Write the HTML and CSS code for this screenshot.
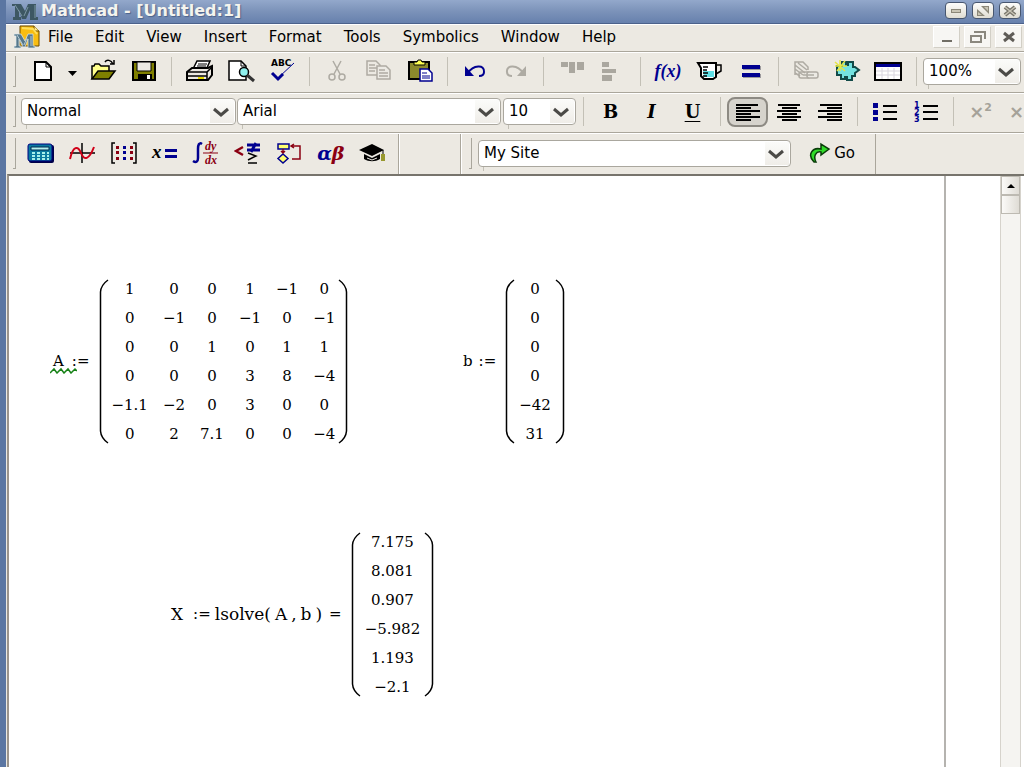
FILE: index.html
```html
<!DOCTYPE html>
<html lang="en">
<head>
    <meta charset="UTF-8">
    <meta name="viewport" content="width=device-width, initial-scale=1.0">
    <title>Mathcad - [Untitled:1]</title>
    <link rel="stylesheet" href="styles.css">
</head>
<body>
<div class="window">
    <header class="titlebar">
        <svg class="title-logo" width="28" height="20" viewBox="0 0 28 20">
            <path d="M1 3h9l4 7 3-7h8v13h2v3h-8V9l-4 9h-4L8 9v7h2v3H2v-3h2V5H1z" fill="#3d5763"/>
            <path d="M4 4l7 11M24 4v13M17 6l-4 9" stroke="#7d98a4" fill="none"/>
        </svg>
        <h1>Mathcad - [Untitled:1]</h1>
        <div class="window-buttons">
            <button aria-label="Minimize"><svg width="14" height="12" viewBox="0 0 14 12"><rect x="2" y="4" width="10" height="4" fill="#8b8778"/><rect x="3" y="5" width="8" height="2" fill="#c9c5b5"/></svg></button>
            <button aria-label="Maximize"><svg width="14" height="12" viewBox="0 0 14 12"><path d="M5 1h8v8zM1 4v7h8z" fill="#8b8778"/><path d="M8 2h4v4zM2 7v3h4z" fill="#c9c5b5"/></svg></button>
            <button aria-label="Close"><svg width="14" height="12" viewBox="0 0 14 12"><path d="M2 2l10 8M12 2L2 10" stroke="#77746a" stroke-width="4"/><path d="M2 2l10 8M12 2L2 10" stroke="#c9c5b5" stroke-width="1.5"/></svg></button>
        </div>
    </header>

    <nav class="menubar">
        <svg class="doc-logo" width="26" height="24" viewBox="0 0 26 24">
            <path d="M6 1h14l5 5v15H6z" fill="#f8bd12" stroke="#6d4a00"/>
            <path d="M20 1v5h5" fill="#ffe88a" stroke="#6d4a00"/>
            <path d="M8 3l11 1 4 5" stroke="#ffdf5c" stroke-width="2" fill="none"/>
            <path d="M0 9h7l4 7 3-7h5v12h2v2h-7v-9l-3 8H9l-4-8v7h2v2H0v-2h2V11H0z" fill="#56788c" stroke="#dfe9ee" stroke-width=".7"/>
            <path d="M3 10l6 10M13 13l-3 7M17 11v10" stroke="#b4c9d3" fill="none"/>
        </svg>
        <div class="menus">
            <a href="#">File</a>
            <a href="#">Edit</a>
            <a href="#">View</a>
            <a href="#">Insert</a>
            <a href="#">Format</a>
            <a href="#">Tools</a>
            <a href="#">Symbolics</a>
            <a href="#">Window</a>
            <a href="#">Help</a>
        </div>
        <div class="doc-buttons">
            <button aria-label="Minimize document"><svg width="16" height="14" viewBox="0 0 16 14"><path d="M3 11h10" stroke="#716e66" stroke-width="2"/></svg></button>
            <button aria-label="Restore document"><svg width="16" height="14" viewBox="0 0 16 14"><path d="M4 2h11v7M1 6h10v6H1z" stroke="#8b887f" stroke-width="2" fill="none"/></svg></button>
            <button aria-label="Close document"><svg width="16" height="14" viewBox="0 0 16 14"><path d="M3 3l10 8M13 3L3 11" stroke="#5f5c57" stroke-width="3"/></svg></button>
        </div>
    </nav>

    <div class="toolbar standard">
        <span class="grip"></span>
        <button class="tool" aria-label="New">
            <svg viewBox="0 0 28 28"><path d="M5 5h11l5 5v13H5z" fill="#fff" stroke="#000" stroke-width="2"/><path d="M16 5v5h5" fill="none" stroke="#000"/></svg>
        </button>
        <button class="tool-arrow" aria-label="New from template">
            <svg width="10" height="6" viewBox="0 0 10 6"><path d="M0 1h9L4.500 6z"/></svg>
        </button>
        <button class="tool" aria-label="Open">
            <svg viewBox="0 0 28 28"><path d="M3 22V9h2l1-2h4l2 2h8v5" fill="#ffff8c" stroke="#000" stroke-width="1.500"/><path d="M3 22l6-8h17l-6 8z" fill="#808000" stroke="#000" stroke-width="1.500"/><path d="M16 5c2-3 6-2 8 2M25 3v4h-4" fill="none" stroke="#000" stroke-width="1.500"/></svg>
        </button>
        <button class="tool" aria-label="Save">
            <svg viewBox="0 0 28 28"><path d="M3 5h22v18H3z" fill="#808000" stroke="#000" stroke-width="2"/><path d="M7 5h14v9H7z" fill="#ece9e2" stroke="#000"/><path d="M8 17h14v6H8z"/><path d="M17 18h3v4h-3z" fill="#fff"/></svg>
        </button>
        <span class="sep"></span>
        <button class="tool" aria-label="Print">
            <svg viewBox="0 0 28 28"><path d="M8 12l4-8h13l-4 9" fill="#fff" stroke="#000" stroke-width="1.500"/><path d="M13 7h9M12 9h9M11 11h9" stroke="#000"/><path d="M2 15l5-4h16l4-2v9l-4 5H2z" fill="#ece9e2" stroke="#000" stroke-width="2"/><path d="M2 15h20l4-4M22 15v8M2 19h20" fill="none" stroke="#000" stroke-width="1.500"/><path d="M13 20h6v2h-6z" fill="#e6d800"/></svg>
        </button>
        <button class="tool" aria-label="Print preview">
            <svg viewBox="0 0 28 28"><path d="M2 4h12l5 5v14H2z" fill="#fff" stroke="#000" stroke-width="1.500"/><path d="M14 4v5h5" fill="none" stroke="#000"/><circle cx="17" cy="15" r="4.500" fill="#8ff0ee" stroke="#000" stroke-width="1.500"/><path d="M20 18l7 6" stroke="#333" stroke-width="3"/></svg>
        </button>
        <button class="tool" aria-label="Check spelling">
            <svg viewBox="0 0 28 28"><text x="3" y="9" class="abc">ABC</text><path d="M10 21L26 6" fill="none" stroke="#000090"/><path d="M4 16l6 6 5-5" fill="none" stroke="#000090" stroke-width="3"/></svg>
        </button>
        <span class="sep"></span>
        <button class="tool" aria-label="Cut">
            <svg viewBox="0 0 28 28" class="gray"><path d="M10 4l7 13M18 4l-7 13"/><circle cx="9" cy="20" r="3"/><circle cx="19" cy="20" r="3"/></svg>
        </button>
        <button class="tool" aria-label="Copy">
            <svg viewBox="0 0 28 28" class="gray"><path d="M3 4h9l4 4v10H3zM5 8h6M5 11h8M5 14h6"/><path d="M13 9h9l4 4v9H13z" fill="#eceae4"/><path d="M15 13h6M15 16h9M15 19h9"/></svg>
        </button>
        <button class="tool" aria-label="Paste">
            <svg viewBox="0 0 28 28"><path d="M3 5h20v17H3z" fill="#8c8a2c" stroke="#000" stroke-width="2"/><path d="M8 8V5h3l1-2h3l1 2h3v3z" fill="#ffff50" stroke="#000"/><path d="M14 12h8l4 4v8H14z" fill="#fff" stroke="#000090" stroke-width="1.500"/><path d="M16 16h5M16 19h8M16 21h8" stroke="#000090"/></svg>
        </button>
        <span class="sep"></span>
        <button class="tool" aria-label="Undo">
            <svg viewBox="0 0 28 28"><path d="M4 9v10h9z" fill="#000090"/><path d="M7 16c5-8 17-9 16-1 0 3-2 4-5 4" fill="none" stroke="#000090" stroke-width="2"/></svg>
        </button>
        <button class="tool" aria-label="Redo">
            <svg viewBox="0 0 28 28"><path d="M24 9v10h-9z" fill="#aeaba3"/><path d="M21 16C16 8 4 7 5 15c0 3 2 4 5 4" fill="none" stroke="#aeaba3" stroke-width="2"/></svg>
        </button>
        <span class="sep"></span>
        <button class="tool" aria-label="Align across">
            <svg viewBox="0 0 28 28" fill="#aaa79f"><path d="M3 5h7v5H3zM11 5h6v11h-6zM19 5h7v8h-7z"/></svg>
        </button>
        <button class="tool" aria-label="Align down">
            <svg viewBox="0 0 28 28" fill="#aaa79f"><path d="M3 5h7v5H3zM3 12h14v4H3zM3 18h10v6H3z"/></svg>
        </button>
        <span class="sep"></span>
        <button class="tool fx" aria-label="Insert function">f(x)</button>
        <button class="tool" aria-label="Insert unit">
            <svg viewBox="0 0 28 28"><path d="M3 6h18v14l-3 2H9l-3-3V11z" fill="#fff" stroke="#000" stroke-width="2"/><path d="M8 14h11v6H9z" fill="#5fe0e6"/><path d="M21 8h5v6l-5 3M8 10h5M8 13h4M8 16h5M8 19h4" fill="none" stroke="#000" stroke-width="1.500"/></svg>
        </button>
        <button class="tool" aria-label="Calculate">
            <svg viewBox="0 0 28 28"><path d="M6 9h18v4H6zM6 17h18v4H6z" fill="#9c9a9c"/><path d="M5 8h18v4H5zM5 16h18v4H5z" fill="#000090"/></svg>
        </button>
        <span class="sep"></span>
        <button class="tool" aria-label="Insert hyperlink">
            <svg viewBox="0 0 28 28" class="gray"><path d="M3 18V5h8l5 5v3M3 8l10 8M3 12l8 6M6 6l9 7M3 16l5 3"/><rect x="7" y="15" width="11" height="6" rx="2"/><rect x="15" y="15" width="11" height="6" rx="2" fill="#eceae4"/><path d="M11 18h11"/></svg>
        </button>
        <button class="tool" aria-label="Insert component">
            <svg viewBox="0 0 28 28"><path d="M4 9h5V5h4v3h2V5h5v5h2l4 3-4 3v3h-3v4h-5v-3h-2v2H8v-4H4z" fill="#74e2e0" stroke="#124a48" stroke-width="2"/><path d="M2 5l10 9M12 4L4 14M7 3v11M2 9h12" stroke="#e5e645" stroke-width="1.500"/></svg>
        </button>
        <button class="tool" aria-label="Data table">
            <svg viewBox="0 0 28 28"><path d="M1 6h26v17H1z" fill="#fff" stroke="#000" stroke-width="2"/><path d="M2 7h24v3H2z" fill="#000090"/><path d="M8 11v11M14 11v11M20 11v11M2 14h24M2 18h24" stroke="#d8d5de"/></svg>
        </button>
        <span class="sep"></span>
        <div class="combo zoom">
            <select aria-label="Zoom"><option>100%</option></select>
            <svg class="chevron" viewBox="0 0 16 10"><path d="M1 2l7 6 7-6"/></svg>
        </div>
    </div>

    <div class="toolbar formatting">
        <span class="grip"></span>
        <div class="combo style">
            <select aria-label="Style"><option>Normal</option></select>
            <svg class="chevron" viewBox="0 0 16 10"><path d="M1 2l7 6 7-6"/></svg>
        </div>
        <div class="combo font">
            <select aria-label="Font"><option>Arial</option></select>
            <svg class="chevron" viewBox="0 0 16 10"><path d="M1 2l7 6 7-6"/></svg>
        </div>
        <div class="combo size">
            <select aria-label="Font size"><option>10</option></select>
            <svg class="chevron" viewBox="0 0 16 10"><path d="M1 2l7 6 7-6"/></svg>
        </div>
        <span class="sep"></span>
        <button class="tool letter">B</button>
        <button class="tool letter italic">I</button>
        <button class="tool letter underline">U</button>
        <span class="sep"></span>
        <button class="tool pressed" aria-label="Align left">
            <svg viewBox="0 0 28 28" class="lines"><path d="M2 7h22M2 10h15M2 13h24M2 16h15M2 19h24M2 22h15"/></svg>
        </button>
        <button class="tool" aria-label="Align center">
            <svg viewBox="0 0 28 28" class="lines"><path d="M3 7h22M7 10h15M2 13h24M7 16h15M2 19h24M7 22h15"/></svg>
        </button>
        <button class="tool" aria-label="Align right">
            <svg viewBox="0 0 28 28" class="lines"><path d="M4 7h22M11 10h15M2 13h24M11 16h15M2 19h24M11 22h15"/></svg>
        </button>
        <span class="sep"></span>
        <button class="tool" aria-label="Bullets">
            <svg viewBox="0 0 28 28" class="lines"><path d="M12 8h14M12 14h14M12 21h14"/><path d="M2 5h5v5H2zM2 12h5v5H2zM2 19h5v4H2z" class="dots"/></svg>
        </button>
        <button class="tool" aria-label="Numbering">
            <svg viewBox="0 0 28 28" class="lines"><path d="M11 8h15M11 14h15M11 21h15"/><text x="2" y="10" class="num">1</text><text x="2" y="17" class="num">2</text><text x="2" y="24" class="num">3</text></svg>
        </button>
        <span class="sep"></span>
        <button class="tool script" aria-label="Superscript"><span>×<sup>2</sup></span></button>
        <button class="tool script last" aria-label="Subscript">×</button>
    </div>

    <div class="toolbar math">
        <div class="palette">
            <span class="grip"></span>
            <button class="tool" aria-label="Calculator">
                <svg viewBox="0 0 28 28"><rect x="2" y="6" width="25" height="18" rx="2" fill="#000048"/><rect x="1" y="5" width="24" height="17" rx="2" fill="#0a7aa0" stroke="#000080"/><path d="M4 8h18v3H4z" fill="#b5f1ee" stroke="#002a50"/><path d="M5 14h3M10 14h3M15 14h3M20 14h2M5 17h3M10 17h3M15 17h3M20 17h2M5 20h3M10 20h3M15 20h3M20 20h2" stroke="#a5f0ea" stroke-width="2"/></svg>
            </button>
            <button class="tool" aria-label="Graph">
                <svg viewBox="0 0 28 28"><path d="M14 4v20M2 14h25" stroke="#000" stroke-width="1.500"/><path d="M2 20c3-13 8-14 11-6s8 7 13-6" fill="none" stroke="#d00018" stroke-width="2"/></svg>
            </button>
            <button class="tool" aria-label="Matrix">
                <svg viewBox="0 0 28 28"><path d="M5 4H2v20h3M23 4h3v20h-3" fill="none" stroke="#000" stroke-width="1.500"/><path d="M6 7h3v3H6zM6 12h3v3H6zM6 18h3v3H6zM20 7h3v3h-3zM20 12h3v3h-3zM20 18h3v3h-3z" fill="#8b0012"/><path d="M13 7h3v3h-3zM13 12h3v3h-3zM13 18h3v3h-3z" fill="#000090"/></svg>
            </button>
            <button class="tool" aria-label="Evaluation">
                <svg viewBox="0 0 28 28"><text x="1" y="19" class="evalx">x</text><path d="M14 10h12v3H14zM14 16h12v3H14z" fill="#000090"/></svg>
            </button>
            <button class="tool" aria-label="Calculus">
                <svg viewBox="0 0 28 28"><path d="M10 5c-3-2-4 1-4 5v9c0 4-2 5-5 3" fill="none" stroke="#000090" stroke-width="2.500"/><text x="13" y="11" class="deriv">dy</text><path d="M11 14h15" stroke="#8b0012"/><text x="13" y="25" class="deriv">dx</text></svg>
            </button>
            <button class="tool" aria-label="Boolean">
                <svg viewBox="0 0 28 28"><path d="M9 8l-7 4 7 4" fill="none" stroke="#8b0012" stroke-width="2.500"/><path d="M13 6h13M13 11h13M22 4l-5 9" stroke="#000090" stroke-width="3"/><path d="M14 14l8 3-8 4M14 24h9" fill="none" stroke="#000" stroke-width="1.500"/></svg>
            </button>
            <button class="tool" aria-label="Programming">
                <svg viewBox="0 0 28 28"><path d="M3 5h11v5H3z" fill="#ffff70" stroke="#000090" stroke-width="1.500"/><path d="M8 15l5 4.500L8 24l-5-4.500z" fill="#ffff70" stroke="#000090" stroke-width="1.500"/><path d="M8 10v5M6 12l2 2 2-2M17 20h8V7h-8M19 5l-3 2 3 2" fill="none" stroke="#8b0012" stroke-width="1.500"/></svg>
            </button>
            <button class="tool greek" aria-label="Greek">α<span>β</span></button>
            <button class="tool" aria-label="Symbolic">
                <svg viewBox="0 0 28 28"><path d="M1 11l13-6 12 6-12 6z"/><path d="M6 15l8 4 8-4v5c-5 3-11 3-16 0z"/><path d="M9 19l5 2 5-2" stroke="#ece9e2" fill="none"/><path d="M25 11v4" stroke="#000"/><path d="M23 15h4v7h-4z" fill="#98982e"/></svg>
            </button>
        </div>
        <div class="gap"></div>
        <div class="resources">
            <span class="grip"></span>
            <div class="combo site">
                <select aria-label="Address"><option>My Site</option></select>
                <svg class="chevron" viewBox="0 0 16 10"><path d="M1 2l7 6 7-6"/></svg>
            </div>
            <button class="go">
                <svg width="24" height="22" viewBox="0 0 24 22"><path d="M6 20C-1 13 4 5 13 7V2l8 5-8 6v-3c-5-1-8 4-5 10z" fill="#30dc28" stroke="#0b3d0a" stroke-width="1.500"/></svg>
                Go
            </button>
        </div>
    </div>

    <main class="document">
        <div class="worksheet">
            <!-- math regions sit freely on the sheet -->
            <section class="region region-a">
                <span class="name undefined">A
                    <svg width="27" height="7" viewBox="0 0 27 7"><path d="M0 6l4-4 3 4 4-4 3 4 4-4 3 4 4-4 2 2"/></svg>
                </span>
                <span class="assign">:=</span>
                <div class="matrix">
                    <svg class="paren" viewBox="0 0 10 165"><path d="M9 1Q2 6 1.500 13V152Q2 159 9 164"/></svg>
                    <table>
                        <tr><td>1</td><td>0</td><td>0</td><td>1</td><td>−1</td><td>0</td></tr>
                        <tr><td>0</td><td>−1</td><td>0</td><td>−1</td><td>0</td><td>−1</td></tr>
                        <tr><td>0</td><td>0</td><td>1</td><td>0</td><td>1</td><td>1</td></tr>
                        <tr><td>0</td><td>0</td><td>0</td><td>3</td><td>8</td><td>−4</td></tr>
                        <tr><td>−1.1</td><td>−2</td><td>0</td><td>3</td><td>0</td><td>0</td></tr>
                        <tr><td>0</td><td>2</td><td>7.1</td><td>0</td><td>0</td><td>−4</td></tr>
                    </table>
                    <svg class="paren" viewBox="0 0 10 165"><path d="M1 1Q8 6 8.500 13V152Q8 159 1 164"/></svg>
                </div>
            </section>

            <section class="region region-b">
                <span class="name">b</span>
                <span class="assign">:=</span>
                <div class="matrix vector">
                    <svg class="paren" viewBox="0 0 10 165"><path d="M9 1Q2 6 1.500 13V152Q2 159 9 164"/></svg>
                    <table>
                        <tr><td>0</td></tr>
                        <tr><td>0</td></tr>
                        <tr><td>0</td></tr>
                        <tr><td>0</td></tr>
                        <tr><td>−42</td></tr>
                        <tr><td>31</td></tr>
                    </table>
                    <svg class="paren" viewBox="0 0 10 165"><path d="M1 1Q8 6 8.500 13V152Q8 159 1 164"/></svg>
                </div>
            </section>

            <section class="region region-x">
                <span class="name">X</span>
                <span class="assign">:=</span>
                <span class="call"><span>lsolve(</span><span>A</span><span>,</span><span>b</span><span>)</span></span>
                <span class="result">=</span>
                <div class="matrix vector">
                    <svg class="paren" viewBox="0 0 10 165"><path d="M9 1Q2 6 1.500 13V152Q2 159 9 164"/></svg>
                    <table>
                        <tr><td>7.175</td></tr>
                        <tr><td>8.081</td></tr>
                        <tr><td>0.907</td></tr>
                        <tr><td>−5.982</td></tr>
                        <tr><td>1.193</td></tr>
                        <tr><td>−2.1</td></tr>
                    </table>
                    <svg class="paren" viewBox="0 0 10 165"><path d="M1 1Q8 6 8.500 13V152Q8 159 1 164"/></svg>
                </div>
            </section>
        </div>
        <div class="margin"></div>
        <div class="scrollbar">
            <button aria-label="Scroll up"><svg width="10" height="5" viewBox="0 0 10 5"><path d="M1 5l4-4 4 4z"/></svg></button>
            <div class="thumb"></div>
        </div>
    </main>
</div>
</body>
</html>
```
FILE: styles.css
```css
* {
    box-sizing: border-box;
}

body {
    margin: 0;
    font-family: "DejaVu Sans", Verdana, sans-serif;
    font-size: 15px;
    color: #000;
    background: #fff;
}

button {
    border: none;
    background: none;
    padding: 0;
    font: inherit;
    color: inherit;
}

.window {
    display: flex;
    flex-direction: column;
    height: 100vh;
    border-left: 6px solid #5b76a2;
    background: #ece9e2;
    overflow: hidden;
}

/* title bar */
.titlebar {
    display: flex;
    align-items: center;
    flex: none;
    height: 24px;
    margin-left: -6px;
    padding: 0 3px 2px 11px;
    background: linear-gradient(#93a8cb, #7b92b9 50%, #6781ad);
    border-bottom: 1px solid #4c628b;
}

.title-logo {
    flex: none;
}

.titlebar h1 {
    flex: 1;
    margin: 0 0 0 2px;
    font-size: 16px;
    line-height: 20px;
    color: #f4f4ee;
    text-shadow: 1px 1px 1px #4c628b;
}

.window-buttons {
    display: flex;
    gap: 5px;
}

.window-buttons button {
    display: flex;
    align-items: center;
    justify-content: center;
    width: 22px;
    height: 17px;
    border: 1px solid #47566f;
    border-radius: 4px;
    background: linear-gradient(#fdfdfb, #e0ddd2);
}

/* menus */
.menubar {
    display: flex;
    align-items: center;
    flex: none;
    height: 28px;
    padding: 0 0 2px 8px;
    border-top: 1px solid #fff;
    border-bottom: 1px solid #aaa69b;
}

.doc-logo {
    flex: none;
}

.menus {
    display: flex;
    flex: 1;
    gap: 22px;
    margin-left: 8px;
    line-height: 20px;
}

.menus a {
    color: #000;
    text-decoration: none;
}

.doc-buttons {
    display: flex;
    gap: 4px;
    padding-right: 2px;
}

.doc-buttons button {
    display: flex;
    align-items: center;
    justify-content: center;
    width: 27px;
    height: 22px;
    background: #f7f6f3;
    border: 1px solid #fff;
    border-right-color: #d2cfc6;
    border-bottom-color: #d2cfc6;
}

/* toolbars */
.toolbar {
    display: flex;
    align-items: center;
    flex: none;
    height: 41px;
    padding: 0 3px 3px 7px;
    border-top: 1px solid #fff;
    border-bottom: 1px solid #aaa69b;
}

.grip {
    flex: none;
    width: 3px;
    height: 31px;
    border: 1px solid #a9a69c;
    border-width: 0 1px 1px 0;
}

.sep {
    flex: none;
    width: 14px;
    height: 29px;
    background: linear-gradient(#c3c0b6, #c3c0b6) center / 1px 100% no-repeat;
}

.tool {
    display: flex;
    align-items: center;
    justify-content: center;
    flex: none;
    width: 41px;
    height: 30px;
}

.tool svg {
    flex: none;
    width: 28px;
    height: 28px;
}

.standard .grip {
    margin-right: 7px;
}

.standard .tool {
    flex: 1 1 0;
}

.tool-arrow {
    flex: none;
    width: 18px;
    height: 30px;
}

.gray {
    fill: none;
    stroke: #aeaba3;
    stroke-width: 1.5;
}

.abc {
    font: bold 9px "DejaVu Sans", sans-serif;
}

.fx {
    font: italic bold 18px "Liberation Serif", serif;
    color: #000090;
}

.letter {
    font: bold 18px "DejaVu Serif", serif;
}

.italic {
    font-style: italic;
}

.underline {
    text-decoration: underline;
    text-underline-offset: 3px;
}

.lines {
    fill: none;
    stroke: #000;
    stroke-width: 2;
}

.dots,
.num {
    fill: #000090;
    stroke: none;
}

.num {
    font: bold 8px "DejaVu Sans", sans-serif;
}

.pressed {
    border: 2px solid #8d8a83;
    border-radius: 8px;
    background: #d6d3cc;
}

.script {
    color: #a5a299;
    font-size: 18px;
    font-weight: bold;
}

.script sup {
    font-size: 11px;
    line-height: 0;
}

.last {
    flex: 1 1 0;
    justify-content: flex-end;
}

/* drop-downs */
.combo {
    position: relative;
    flex: none;
    height: 27px;
}

.combo::after {
    content: "";
    position: absolute;
    left: 5px;
    top: 27px;
    width: 1px;
    height: 4px;
    background: #c3c0b6;
}

.combo select {
    appearance: none;
    width: 100%;
    height: 100%;
    padding: 0 5px 1px;
    border: 1px solid #aaa79e;
    border-radius: 4px;
    background: linear-gradient(#fbfbf9, #efede8) right 1px center / 24px 23px no-repeat #fff;
    font: inherit;
    color: #000;
}

.chevron {
    position: absolute;
    right: 7px;
    top: 9px;
    width: 16px;
    height: 10px;
    fill: none;
    stroke: #4b4a47;
    stroke-width: 3;
    pointer-events: none;
}

.zoom {
    width: 98px;
}

.formatting {
    height: 40px;
    padding-right: 0;
    overflow: hidden;
}

.formatting .grip {
    margin-right: 5px;
}

.style {
    width: 215px;
    margin-right: 1px;
}

.font {
    width: 264px;
    margin-right: 2px;
}

.size {
    width: 73px;
}

/* math palette and resources */
.math {
    height: 41px;
    padding: 0;
    align-items: stretch;
    border-bottom: none;
}

.palette,
.resources {
    display: flex;
    align-items: center;
    padding: 0 5px 2px 7px;
    border-right: 1px solid #aaa69b;
}

.palette {
    width: 393px;
}

.palette .grip {
    margin-right: 4px;
}

.palette .tool {
    flex: 1 1 0;
}

.greek {
    font: italic bold 19px "DejaVu Serif", serif;
    color: #000090;
}

.greek span {
    color: #8b0012;
}

.evalx {
    font: italic bold 19px "Liberation Serif", serif;
}

.deriv {
    font: italic bold 12px/1 "Liberation Serif", serif;
    fill: #8b0012;
}

.gap {
    width: 62px;
    border-left: 1px solid #fff;
    border-right: 1px solid #aaa69b;
}

.resources {
    width: 415px;
    border-left: 1px solid #fff;
}

.resources .grip {
    margin-right: 6px;
}

.site {
    flex: 1;
}

.go {
    display: flex;
    align-items: center;
    gap: 2px;
    margin: 0 15px 0 17px;
}

/* worksheet */
.document {
    display: flex;
    flex: 1;
    min-height: 0;
    margin-left: 1px;
    border-left: 2px solid #9c958c;
    border-top: 2px solid #77746c;
    background: #fff;
}

.worksheet {
    position: relative;
    flex: 1;
    border-right: 2px solid #b5b3af;
    font-family: "DejaVu Serif", serif;
}

.margin {
    width: 54px;
}

.region {
    position: absolute;
    display: flex;
    align-items: center;
}

.region-a {
    left: 44px;
    top: 98px;
}

.region-b {
    left: 454px;
    top: 98px;
}

.region-x {
    left: 162px;
    top: 351px;
}

.name {
    position: relative;
}

.undefined svg {
    position: absolute;
    left: -3px;
    top: 15px;
    fill: none;
    stroke: #178217;
    stroke-width: 1.5;
}

.assign {
    margin: 0 9px 0 6px;
}

.region-a .assign {
    margin: 0 10px 0 8px;
}

.call {
    display: flex;
    gap: 4px;
}

.region-x .name,
.call {
    font-size: 17px;
}

.region-x .assign {
    margin: 0 4px 0 10px;
}

.result {
    margin: 0 9px 0 7px;
}

.matrix {
    display: flex;
    align-items: center;
}

.paren {
    flex: none;
    width: 10px;
    height: 165px;
    fill: none;
    stroke: #000;
    stroke-width: 1.5;
}

.matrix table {
    margin: 0 -5px;
    border-collapse: collapse;
}

.matrix td {
    height: 29px;
    padding: 0 8px 0 7px;
    text-align: center;
    line-height: 20px;
}

.vector td {
    padding: 0 9px;
}

/* scroll bar */
.scrollbar {
    width: 21px;
    margin-right: 3px;
    background: #f5f4f1;
    border: 1px solid #d6d3cc;
    border-width: 0 1px;
}

.scrollbar button,
.thumb {
    display: flex;
    align-items: center;
    justify-content: center;
    width: 100%;
    height: 19px;
    border: 1px solid #bdbab2;
    background: linear-gradient(90deg, #fbfaf8, #dfdcd5);
}
```
